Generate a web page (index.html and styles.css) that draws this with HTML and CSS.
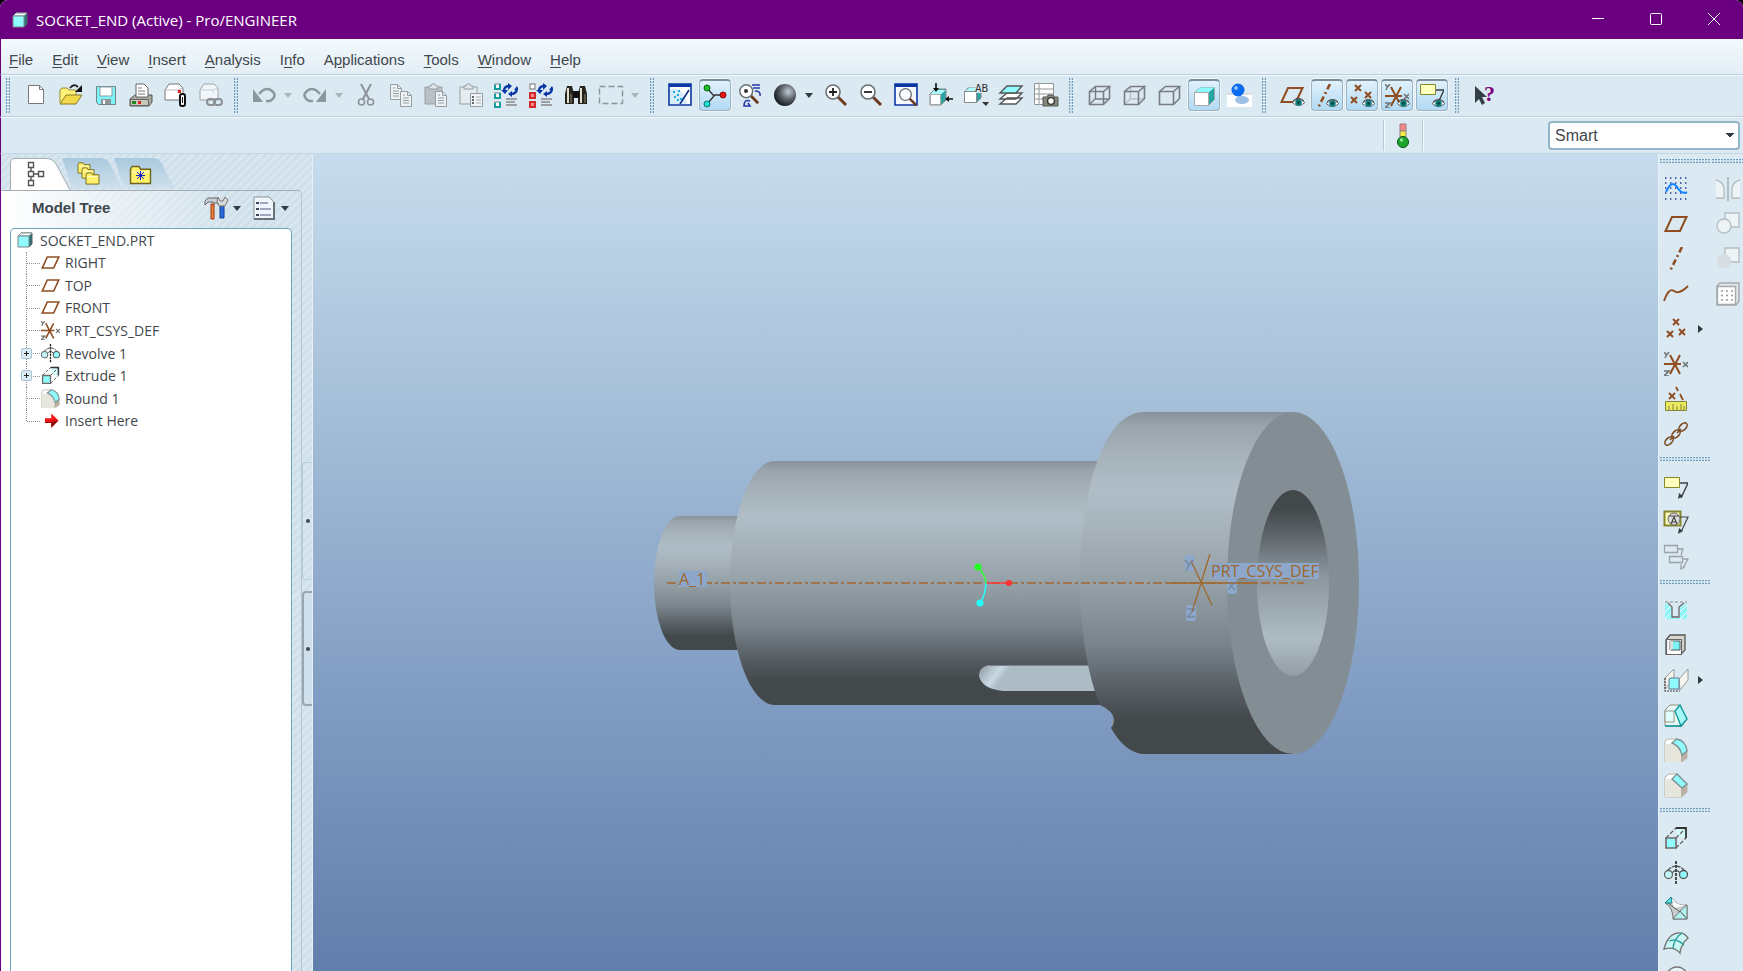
FILE: index.html
```html
<!DOCTYPE html>
<html lang="en">

<head>
    <meta charset="UTF-8">
    <meta name="viewport" content="width=device-width, initial-scale=1.0">
    <title>SOCKET_END (Active) - Pro/ENGINEER</title>
    <link rel="stylesheet" href="styles.css">
</head>

<body>
    <!-- shared icons -->
    <svg class="sprite" aria-hidden="true">
        <symbol id="cube" viewBox="0 0 16 16">
            <path d="M1 4l3-3h11v11l-3 3z" fill="#26767a" stroke="#5a6264" />
            <path d="M1 4l3-3h11l-3 3z" fill="#f4ffff" stroke="#8a9496" />
            <path d="M1 4h11v11H1z" fill="#8ffbff" stroke="#7a8688" />
        </symbol>
        <symbol id="plane" viewBox="0 0 24 24">
            <path d="M8 5H22.500L16 19H1.500z" fill="none" stroke="#8f4d20" stroke-width="2" />
        </symbol>
        <symbol id="axis" viewBox="0 0 24 24">
            <path d="M18 0L6 24" fill="none" stroke="#8f4d20" stroke-width="2.600" stroke-dasharray="6 3 2 3" />
        </symbol>
        <symbol id="points" viewBox="0 0 24 24">
            <path d="M9 1l6 6m0-6l-6 6M15 11l6 6m0-6l-6 6M3 13l6 6m0-6l-6 6" fill="none" stroke="#8f4d20" stroke-width="2" />
        </symbol>
        <symbol id="csys" viewBox="0 0 24 24">
            <path d="M0 12h17M6 22L16 3M6 3l10 19" fill="none" stroke="#8f4d20" stroke-width="2" />
            <path d="M0 0l2.500 3L5 0M2.500 3L1 6M0 19h5l-5 5h5M19 10l5 5m0-5l-5 5" fill="none" stroke="#707678" stroke-width="1.600" />
        </symbol>
        <symbol id="eye" viewBox="0 0 14 10">
            <path d="M0 5Q7-2 14 5Q7 12 0 5z" fill="#fff" stroke="#555" />
            <circle cx="7" cy="5" r="3.600" fill="#0a7f7c" />
            <circle cx="7" cy="5" r="1.500" fill="#063c3c" />
            <path d="M1 3Q7-2 13 3" fill="none" stroke="#333" />
        </symbol>
        <symbol id="note" viewBox="0 0 24 24">
            <path d="M.500 2.500h15v10H.500z" fill="#ffffbe" stroke="#85852c" />
            <path d="M16 8h8l-7 15" fill="none" stroke="#3c4144" stroke-width="1.400" />
            <path d="M14 24l1-6 4 3z" fill="#3c4144" />
        </symbol>
        <symbol id="extrude" viewBox="0 0 24 24">
            <path d="M12 2h10v10l-8-2z" fill="#d6fbfb" />
            <path d="M2 12L12 2M12 12L22 2M12 22l10-10" fill="none" stroke="#555" stroke-width="1.200" stroke-dasharray="4 2" />
            <path d="M12 2h10v10" fill="none" stroke="#333" stroke-width="1.800" />
            <path d="M2 12h10v10H2z" fill="#8ffbff" stroke="#6f6a66" stroke-width="1.600" />
        </symbol>
        <symbol id="revolve" viewBox="0 0 24 24">
            <path d="M12 0v24" stroke="#222" stroke-width="1.600" stroke-dasharray="3 1" />
            <path d="M4 9Q12 1 20 9M8 12Q12 7 16 12" fill="none" stroke="#444" stroke-width="1.200" stroke-dasharray="4 1" />
            <circle cx="4.500" cy="13.500" r="4" fill="#c3fbfc" stroke="#666" stroke-width="1.300" />
            <circle cx="19.500" cy="13.500" r="4" fill="#8ffbff" stroke="#555" stroke-width="1.300" />
        </symbol>
        <symbol id="round" viewBox="0 0 24 24">
            <path d="M1 3L4 1h9q9 2 10 12v7l-5 4H1z" fill="#fff" stroke="#b9b4a8" />
            <path d="M1 6h7q8 2 9 11v7H1z" fill="#e7e6dc" />
            <path d="M17 17v7l6-4v-7z" fill="#b9b2a4" />
            <path d="M8 5l5-4q9 2 10 12l-5 4Q16 8 8 5z" fill="#8ffbff" stroke="#7c9090" stroke-width="1.400" />
        </symbol>
        <symbol id="wire" viewBox="0 0 24 24">
            <path d="M2.500 8.500h14v13h-14zM2.500 8.500l6-5h14l-6 5M22.500 3.500v12l-6 6" fill="none" stroke="#777d80" stroke-width="1.600" />
        </symbol>
        <symbol id="lens" viewBox="0 0 24 24">
            <path d="M14 14l8 8" stroke="#6d3a20" stroke-width="3" />
            <circle cx="9" cy="9" r="7" fill="#fff" stroke="#6a6f72" stroke-width="1.600" />
        </symbol>
        <symbol id="envelope" viewBox="0 0 24 24">
            <path d="M1 7l4-6h10l4 4v12H1z" fill="#fff" stroke="#777" />
            <path d="M1 7h13l5-2M14 7v3" fill="none" stroke="#bbb" />
        </symbol>
        <symbol id="sync" viewBox="0 0 24 24">
            <path d="M10 8q0-5 5-5M23 5q0 6-6 6" fill="none" stroke="#0b37a4" stroke-width="2.400" />
            <path d="M14 0l4 3-4 4zM7 7h7l-3 4zM18 8v6l-4-3zM20 7l3-4 2 4z" fill="#0b37a4" />
            <path d="M12 16h11M12 19h9M12 22h11" stroke="#888" stroke-width="1.400" />
        </symbol>
        <symbol id="sheet" viewBox="0 0 12 16">
            <path d="M.500.500h7l4 4v11H.500z" fill="#edf2f5" stroke="#969ea3" />
            <path d="M7.500.500v4h4M3 4h2M3 7h6M3 9.500h6M3 12h6" fill="none" stroke="#969ea3" />
        </symbol>
        <symbol id="clipboard" viewBox="0 0 20 22">
            <path d="M1 4h17v17H1z" stroke="#969ea3" />
            <path d="M5 6V3h2l1-2h3l1 2h2v3z" fill="#dfe6ea" stroke="#969ea3" />
        </symbol>
        <symbol id="folder" viewBox="0 0 16 14">
            <path d="M1 3l1-2h5l1 2h7v10H1z" fill="#fff16a" stroke="#6d6420" />
            <path d="M2 5h12" stroke="#fffbd0" />
        </symbol>
    </svg>

    <div class="window">
        <header class="titlebar">
            <svg class="app-icon"><use href="#cube" /></svg>
            <h1>SOCKET_END (Active) - Pro/ENGINEER</h1>
            <button aria-label="Minimize"><svg viewBox="0 0 12 12"><path d="M0 5.500h12" /></svg></button>
            <button aria-label="Maximize"><svg viewBox="0 0 12 12"><rect x=".5" y=".5" width="11" height="11" rx="1" /></svg></button>
            <button aria-label="Close"><svg viewBox="0 0 12 12"><path d="M0 0l12 12M12 0L0 12" /></svg></button>
        </header>

        <nav class="menubar">
            <button><u>F</u>ile</button>
            <button><u>E</u>dit</button>
            <button><u>V</u>iew</button>
            <button><u>I</u>nsert</button>
            <button><u>A</u>nalysis</button>
            <button>I<u>n</u>fo</button>
            <button>A<u>p</u>plications</button>
            <button><u>T</u>ools</button>
            <button><u>W</u>indow</button>
            <button><u>H</u>elp</button>
        </nav>

        <div class="toolbar">
            <!-- file -->
            <div class="group">
                <button class="tool" aria-label="New"><svg viewBox="0 0 24 24"><path d="M4.500 2.500h11l4 4v14h-15z" fill="#fff" stroke="#777" /><path d="M15.500 2.500v4h4" fill="none" stroke="#777" /></svg></button>
                <button class="tool" aria-label="Open"><svg viewBox="0 0 24 24"><path d="M1 20V7l2-2h5l2 2h7v5" fill="#fff07a" stroke="#9b8c32" /><path d="M1 21l6-9h16l-6 9z" fill="#f0d848" stroke="#8a7a26" /><path d="M11 5q4-5 8-1" fill="none" stroke="#222" stroke-width="1.800" /><path d="M23 2v7h-7z" fill="#111" /></svg></button>
                <button class="tool" aria-label="Save"><svg viewBox="0 0 24 24"><path d="M2.500 3.500h19v18h-17l-2-2z" fill="#7ff3fa" stroke="#6f8488" /><path d="M6 4h12v9H6z" fill="#fff" stroke="#88a4a8" /><path d="M7 16h10v5H7z" fill="#8f9496" /><path d="M9 17h2v4H9z" fill="#fff" /></svg></button>
                <button class="tool" aria-label="Print"><svg viewBox="0 0 24 24"><path d="M1 16l5-4h17v7l-3 4H1z" fill="#a9a89f" stroke="#555" /><path d="M1.500 16.500h18v6h-18z" fill="#c9c7bb" stroke="#666" /><path d="M7 14V1h8l4 4v9z" fill="#fff" stroke="#666" /><path d="M9 5h4M9 8h7M9 11h7" stroke="#777" /><path d="M3 18h4v3H3z" fill="#1c8a20" /><path d="M9 18h3v3H9z" fill="#d22" /></svg></button>
                <button class="tool" aria-label="Send mail"><svg viewBox="0 0 24 24"><use href="#envelope" width="24" height="24" /><path d="M14 7h3v3h-3z" fill="#e02020" /><rect x="16" y="11" width="5" height="12" rx="2" fill="#fff" stroke="#111" stroke-width="2" /><path d="M18.500 14v6" stroke="#111" /></svg></button>
                <button class="tool off" aria-label="Send link"><svg viewBox="0 0 24 24"><use href="#envelope" width="24" height="24" /><rect x="8" y="16" width="8" height="6" rx="3" fill="none" stroke="#555" stroke-width="2" /><rect x="15" y="16" width="8" height="6" rx="3" fill="none" stroke="#555" stroke-width="2" /></svg></button>
            </div>

            <!-- edit -->
            <div class="group">
                <button class="tool" aria-label="Undo"><svg viewBox="0 0 24 24"><path d="M7 11Q14 3 20 8t-2 10h-4" fill="none" stroke="#8b979e" stroke-width="2.400" /><path d="M1 6v13h10z" fill="#8b979e" /></svg></button>
                <button class="drop pale" aria-label="Undo list"></button>
                <button class="tool" aria-label="Redo"><svg viewBox="0 0 24 24"><path d="M17 11Q10 3 4 8t2 10h4" fill="none" stroke="#8b979e" stroke-width="2.400" /><path d="M23 6v13H13z" fill="#8b979e" /></svg></button>
                <button class="drop pale" aria-label="Redo list"></button>
                <button class="tool" aria-label="Cut"><svg viewBox="0 0 24 24"><path d="M7 1l8 15M17 1L9 16" stroke="#8b9398" stroke-width="2" /><circle cx="7.500" cy="19" r="3" fill="none" stroke="#8b9398" stroke-width="1.600" /><circle cx="16.500" cy="19" r="3" fill="none" stroke="#8b9398" stroke-width="1.600" /></svg></button>
                <button class="tool" aria-label="Copy"><svg viewBox="0 0 24 24"><use href="#sheet" x="1" y="1" width="12" height="16" /><use href="#sheet" x="11" y="8" width="12" height="16" /></svg></button>
                <button class="tool" aria-label="Paste"><svg viewBox="0 0 24 24"><use href="#clipboard" width="20" height="22" fill="#b9c1c6" /><use href="#sheet" x="11" y="8" width="12" height="16" /></svg></button>
                <button class="tool" aria-label="Paste special"><svg viewBox="0 0 24 24"><use href="#clipboard" width="20" height="22" fill="#e6edf1" /><path d="M11.500 10.500h12v13h-12z" fill="#f0f4f6" stroke="#969ea3" /><path d="M13 14h2M13 17h2M13 20h2" stroke="#666" stroke-width="2" /><path d="M17 14h5M17 17h5M17 20h5" stroke="#aaa" /></svg></button>
                <button class="tool" aria-label="Regenerate"><svg viewBox="0 0 24 24"><path d="M1 1h5v5H1zM1 10h5v5H1zM1 19h5v5H1z" fill="#fff" stroke="#7a8688" stroke-width="1.200" /><path d="M1 2v4h5V1M1 11v4h5v-5M1 20v4h5v-5" fill="none" stroke="#169c9c" stroke-width="2" /><use href="#sync" width="24" height="24" /></svg></button>
                <button class="tool" aria-label="Regenerate manager"><svg viewBox="0 0 24 24"><path d="M1 1h5v5H1z" fill="#fff" stroke="#999" stroke-width="1.400" /><path d="M1 10h5v5H1zM1 19h5v5H1z" fill="#ff8a8a" stroke="#d02a2a" stroke-width="2" /><use href="#sync" width="24" height="24" /></svg></button>
                <button class="tool" aria-label="Find"><svg viewBox="0 0 24 24"><path d="M3 3h5l2 8v10H1V11zM16 3h5l2 8v10h-9V11z" fill="#26241f" /><path d="M9 8h6v7H9z" fill="#111" /><path d="M4 5v15M17 5v15" stroke="#e3dfcb" stroke-width="2" /><path d="M7 11v9M21 11v9" stroke="#8d8873" /></svg></button>
                <button class="tool" aria-label="Select"><svg viewBox="0 0 24 24"><path d="M.500 3.500h23v17H.500z" fill="none" stroke="#8b9398" stroke-width="1.400" stroke-dasharray="6 3" /></svg></button>
                <button class="drop pale" aria-label="Select options"></button>
            </div>

            <!-- view -->
            <div class="group">
                <button class="tool" aria-label="Repaint"><svg viewBox="0 0 24 24"><path d="M1 1h22v21H1z" fill="#fff" stroke="#0b37a4" stroke-width="1.600" /><path d="M1 1h22v3H1z" fill="#0b37a4" /><path d="M2 6q14-2 17 15H2z" fill="#d6ecfa" /><path d="M21 7L12 21" stroke="#0b2f8a" stroke-width="1.600" /><path d="M5 9h2M9 12h2M6 14h2M10 8h2M12 16h2M9 17h2" stroke="#1eaae8" stroke-width="2" /></svg></button>
                <button class="tool on" aria-label="Spin center"><svg viewBox="0 0 24 24"><path d="M4 4l7 8-7 8M11 11h10" fill="none" stroke="#333" stroke-width="1.400" /><circle cx="4" cy="4" r="3" fill="#19c321" stroke="#0a5f10" /><circle cx="20" cy="11" r="3" fill="#ee1515" stroke="#7d0808" /><circle cx="4" cy="20" r="3" fill="#1fe0d8" stroke="#0c6f6c" /></svg></button>
                <button class="tool" aria-label="Orient mode"><svg viewBox="0 0 24 24"><use href="#lens" width="22" height="22" /><circle cx="8" cy="8" r="2" fill="#333" /><path d="M14 2h8M15 5h7M17 8q6 0 5 5M12 18q-6-2-6 5h6l-2-3" fill="none" stroke="#2438a8" stroke-width="1.600" /></svg></button>
                <button class="tool" aria-label="Appearance"><svg viewBox="0 0 24 24"><defs><radialGradient id="ball" cx="65%" cy="35%" r="70%"><stop offset="0" stop-color="#c3cbd2" /><stop offset=".5" stop-color="#5d666e" /><stop offset="1" stop-color="#14171a" /></radialGradient></defs><circle cx="12" cy="12" r="11" fill="url(#ball)" /></svg></button>
                <button class="drop" aria-label="Appearance list"></button>
                <button class="tool" aria-label="Zoom in"><svg viewBox="0 0 24 24"><use href="#lens" width="24" height="24" /><path d="M5 9h8M9 5v8" stroke="#222" stroke-width="1.800" /></svg></button>
                <button class="tool" aria-label="Zoom out"><svg viewBox="0 0 24 24"><use href="#lens" width="24" height="24" /><path d="M5 9h8" stroke="#222" stroke-width="1.800" /></svg></button>
                <button class="tool" aria-label="Refit"><svg viewBox="0 0 24 24"><path d="M1 1h22v21H1z" fill="#f3f8fc" stroke="#0b37a4" stroke-width="1.600" /><path d="M1 1h22v3H1z" fill="#0b37a4" /><use href="#lens" x="4" y="4" width="20" height="20" /></svg></button>
                <button class="tool" aria-label="Reorient"><svg viewBox="0 0 24 24"><path d="M1 11l5-5h11v11l-5 5H1z" fill="#2ba4a4" stroke="#888" /><path d="M1.500 11.500h10v10h-10z" fill="#fff" stroke="#aaa" /><path d="M1.500 11l4-4h11l-4 4z" fill="#aafcff" /><path d="M7 0v6M24 16h-6" stroke="#111" stroke-width="1.600" /><path d="M4 5h6l-3 4zM20 13v6l-4-3z" fill="#111" /></svg></button>
                <button class="tool" aria-label="Saved views"><svg viewBox="0 0 24 24"><path d="M0 9l4-4h13v10l-4 4z" fill="#2ba4a4" stroke="#888" /><path d="M.500 8.500h12v11H.500z" fill="#fff" stroke="#888" /><path d="M1 8l4-3h11l-3 3z" fill="#aafcff" /><path d="M11-1h14v11H12z" fill="#dce9f2" /><text x="11" y="9" class="mini">AB</text><path d="M18 19h7l-3 4z" fill="#333" /></svg></button>
                <button class="tool" aria-label="Layers"><svg viewBox="0 0 24 24"><path d="M1 21l7-6h15l-6 6zM1 16l7-6h15l-6 6z" fill="#fff" stroke="#555" stroke-width="1.400" /><path d="M1 10l7-7h15l-6 7z" fill="#8ffbff" stroke="#555" stroke-width="1.400" /></svg></button>
                <button class="tool" aria-label="View manager"><svg viewBox="0 0 24 24"><path d="M.500.500h19v21H.500zM5 1v20M1 6h18M1 11h18M1 16h18" fill="#fff" stroke="#909598" /><path d="M9 14h4l1-2h5l1 2h4v9H9z" fill="#85867c" stroke="#55564e" /><circle cx="17" cy="18" r="3.400" fill="#fff" stroke="#333" stroke-width="1.400" /></svg></button>
            </div>

            <!-- display style -->
            <div class="group">
                <button class="tool" aria-label="Wireframe"><svg viewBox="0 0 24 24"><use href="#wire" width="24" height="24" /><path d="M8.500 4v12h14M8.500 15.500l-6 6" fill="none" stroke="#777d80" stroke-width="1.400" /></svg></button>
                <button class="tool" aria-label="Hidden line"><svg viewBox="0 0 24 24"><path d="M8.500 4v12h14M8.500 15.500l-6 6" fill="none" stroke="#b9c0c4" stroke-width="1.400" /><use href="#wire" width="24" height="24" /></svg></button>
                <button class="tool" aria-label="No hidden"><svg viewBox="0 0 24 24"><use href="#wire" width="24" height="24" /></svg></button>
                <button class="tool on" aria-label="Shading"><svg viewBox="0 0 24 24"><path d="M2.500 8.500l6-5h14v12l-6 6z" fill="#27a5a3" stroke="#9aa" /><path d="M2.500 8.500l6-5h14l-6 5z" fill="#8ffbff" /><path d="M2.500 8.500h14v13h-14z" fill="#fff" stroke="#aaa" /></svg></button>
                <button class="tool" aria-label="Enhanced realism"><svg viewBox="0 0 24 24"><path d="M0 11h25v13H0z" fill="#fff" /><path d="M0 11h25" stroke="#ccc" /><ellipse cx="15" cy="17" rx="7" ry="4" fill="#9cc0e6" /><circle cx="11" cy="7" r="6.500" fill="#0b6cf0" /><circle cx="9" cy="5" r="2" fill="#8cc2ff" /></svg></button>
            </div>

            <!-- datum display -->
            <div class="group">
                <button class="tool" aria-label="Show planes"><svg viewBox="0 0 24 24"><use href="#plane" width="24" height="24" /><use href="#eye" x="12" y="15" width="13" height="9" /></svg></button>
                <button class="tool on" aria-label="Show axes"><svg viewBox="0 0 24 24"><use href="#axis" x="-3" width="24" height="24" /><use href="#eye" x="11" y="15" width="13" height="9" /></svg></button>
                <button class="tool on" aria-label="Show points"><svg viewBox="0 0 24 24"><path d="M5 1l6 6m0-6l-6 6M15 8l6 6m0-6l-6 6M1 13l6 6m0-6l-6 6" fill="none" stroke="#8f4d20" stroke-width="2" /><use href="#eye" x="12" y="15" width="13" height="9" /></svg></button>
                <button class="tool on" aria-label="Show csys"><svg viewBox="0 0 24 24"><use href="#csys" width="24" height="24" /><use href="#eye" x="12" y="15" width="13" height="9" /></svg></button>
                <button class="tool on" aria-label="Show annotations"><svg viewBox="0 0 24 24"><use href="#note" y="-2" width="24" height="24" /><use href="#eye" x="12" y="15" width="13" height="9" /></svg></button>
            </div>

            <div class="group">
                <button class="tool" aria-label="Context help"><svg viewBox="0 0 24 24"><path d="M2 3v17l4-4 3 6 3-2-3-6h5z" fill="#333e46" /><text x="11" y="18" class="ask">?</text></svg></button>
            </div>
        </div>

        <div class="statusbar">
            <div class="status-light">
                <svg viewBox="0 0 14 26"><path d="M4 1h6v7H4z" fill="#f08a8a" stroke="#a77" /><path d="M4 8h6v6H4z" fill="#f5ee3c" stroke="#888" /><circle cx="7" cy="19" r="5.500" fill="#1ea52c" stroke="#0b5514" /><circle cx="5.500" cy="17" r="1.700" fill="#8be693" /></svg>
            </div>
            <select class="filter" aria-label="Selection filter">
                <option>Smart</option>
            </select>
        </div>

        <main class="workspace">
            <aside class="navigator">
                <div class="tabs">
                    <button class="tab active" aria-label="Model Tree">
                        <svg viewBox="0 0 60 32"><path d="M.500 32V5Q.500.500 5 .500H36Q43 .500 46 6L60 32" fill="#fff" stroke="#a3adb3" /><path d="M18.500 4.500h5v5h-5zM18.500 13.500h5v5h-5zM18.500 22.500h5v5h-5zM28.500 13.500h5v5h-5zM21 10v3M21 19v3M24 16h4" fill="none" stroke="#555" stroke-width="1.400" /></svg>
                    </button>
                    <button class="tab" aria-label="Folders">
                        <svg viewBox="0 0 60 32"><path d="M0 0H38Q45 0 48 6L60 30H10z" fill="url(#tabfade)" /><use href="#folder" x="15" y="4" width="14" height="12" /><use href="#folder" x="19" y="9" width="14" height="12" /><use href="#folder" x="23" y="14" width="15" height="13" /></svg>
                    </button>
                    <button class="tab" aria-label="Favorites">
                        <svg viewBox="0 0 60 32"><defs><linearGradient id="tabfade" x2="0" y2="1"><stop offset="0" stop-color="#a9c9df" /><stop offset="1" stop-color="#cfe0eb" /></linearGradient></defs><path d="M0 0H38Q45 0 48 6L60 30H10z" fill="url(#tabfade)" /><use href="#folder" x="15" y="7" width="23" height="20" /><path d="M26.500 13v9M22 17.500h9M23 14l7 7M30 14l-7 7" stroke="#1226c8" /></svg>
                    </button>
                </div>

                <section class="panel">
                    <div class="panel-head">
                        <h2>Model Tree</h2>
                        <button class="tool" aria-label="Settings"><svg viewBox="0 0 24 24"><path d="M1 5l3-3h9l2 2v3H9v-1H4L1 9z" fill="#c9cfd2" stroke="#666" /><path d="M7 8h3v15H7z" fill="#e88630" stroke="#a03018" /><path d="M16 10h4v12h-4z" fill="#2a6be0" stroke="#123c96" /><path d="M14 1l2 4h3l2-4 3 3-3 6h-6l-2-5z" fill="#d5dadd" stroke="#777" /></svg></button>
                        <button class="drop" aria-label="Settings menu"></button>
                        <button class="tool" aria-label="Show"><svg viewBox="0 0 24 24"><path d="M2 1h15l5 5v17H2z" fill="#eef6fc" stroke="#8b959b" /><path d="M22 6v17H2" fill="none" stroke="#667077" stroke-width="2" /><path d="M8 7h8M8 13h11M8 19h11" stroke="#88a" stroke-width="1.400" /><path d="M4 7h3M4 13h3M4 19h3" stroke="#445" stroke-width="2" /></svg></button>
                        <button class="drop" aria-label="Show menu"></button>
                    </div>

                    <div class="tree-box">
                        <ul class="tree">
                            <li class="root"><svg><use href="#cube" /></svg>SOCKET_END.PRT</li>
                            <li><svg><use href="#plane" /></svg>RIGHT</li>
                            <li><svg><use href="#plane" /></svg>TOP</li>
                            <li><svg><use href="#plane" /></svg>FRONT</li>
                            <li><svg><use href="#csys" /></svg>PRT_CSYS_DEF</li>
                            <li><button class="expand" aria-label="Expand Revolve 1"></button><svg><use href="#revolve" /></svg>Revolve 1</li>
                            <li><button class="expand" aria-label="Expand Extrude 1"></button><svg><use href="#extrude" /></svg>Extrude 1</li>
                            <li><svg><use href="#round" /></svg>Round 1</li>
                            <li class="last"><svg viewBox="0 0 24 24"><path d="M5 9h8V3l9 9-9 9v-6H5z" fill="#f01414" /><path d="M5 14h8l9-2-9 9v-6H5z" fill="#8d0c0c" /></svg>Insert Here</li>
                        </ul>
                    </div>
                </section>

                <div class="sashes">
                    <button class="sash" aria-label="Resize navigator"></button>
                    <button class="sash raised" aria-label="Collapse navigator"></button>
                </div>
            </aside>

            <section class="viewport">
                <svg viewBox="313 153 1345 817" preserveAspectRatio="xMidYMin slice">
                    <defs>
                        <linearGradient id="metal" x2="0" y2="1">
                            <stop offset="0" stop-color="#88929a" />
                            <stop offset=".04" stop-color="#99a4ab" />
                            <stop offset=".13" stop-color="#a7b3bb" />
                            <stop offset=".23" stop-color="#b0bdc7" />
                            <stop offset=".35" stop-color="#a6b2ba" />
                            <stop offset=".52" stop-color="#929da4" />
                            <stop offset=".68" stop-color="#78848a" />
                            <stop offset=".8" stop-color="#596067" />
                            <stop offset=".9" stop-color="#43484b" />
                            <stop offset="1" stop-color="#43484b" />
                        </linearGradient>
                        <linearGradient id="bore" x2="0" y2="1">
                            <stop offset="0" stop-color="#43484b" />
                            <stop offset=".1" stop-color="#43484b" />
                            <stop offset=".22" stop-color="#596065" />
                            <stop offset=".45" stop-color="#89949b" />
                            <stop offset=".8" stop-color="#afbcc5" />
                            <stop offset="1" stop-color="#929da4" />
                        </linearGradient>
                        <linearGradient id="slot" y2=".15">
                            <stop offset="0" stop-color="#8b979f" />
                            <stop offset=".18" stop-color="#c9d9e3" />
                            <stop offset=".25" stop-color="#adbbc5" />
                            <stop offset="1" stop-color="#adbbc5" />
                        </linearGradient>
                    </defs>

                    <!-- part body -->
                    <path d="M760 515H680A26 67 0 0 0 680 649H760z" fill="url(#metal)" />
                    <path d="M1160 460H775A45 122 0 0 0 775 704H1160z" fill="url(#metal)" />
                    <path d="M1110 664H989Q979 666 979 675Q982 688 1003 690H1110z" fill="url(#slot)" />
                    <path d="M989 664.500H1110" stroke="#77828a" />
                    <path d="M1293 411H1144C1100 411 1080 500 1080 582C1080 630 1088 675 1100 704Q1120 713 1111 727Q1125 752 1144 753H1293z" fill="url(#metal)" />
                    <path d="M1112 726q-1-4 1-9q2 4-1 9z" fill="#8a959c" />
                    <ellipse cx="1293" cy="582" rx="66" ry="171" fill="#838d94" />
                    <ellipse cx="1293" cy="582" rx="36" ry="93" fill="url(#bore)" />

                    <!-- datum axis -->
                    <path d="M667 582H1304" stroke="#a0754d" stroke-width="2" stroke-dasharray="9 3 3 3" />
                    <rect x="679" y="570" width="28" height="16" fill="#8ca7ca" />
                    <text x="679" y="584" class="datum">A_1</text>

                    <!-- spin center -->
                    <path d="M986 582h22" stroke="#ff3a3a" stroke-width="1.500" />
                    <path d="M986 582q-1-8-7-15" fill="none" stroke="#3aff3a" stroke-width="1.500" />
                    <path d="M986 582q0 8-5 20" fill="none" stroke="#2ff" stroke-width="1.500" />
                    <circle cx="1009" cy="582" r="3" fill="#ff3030" />
                    <circle cx="978" cy="566" r="3.500" fill="#2f2" />
                    <circle cx="980" cy="602" r="3.500" fill="#2ff" />

                    <!-- coordinate system -->
                    <g fill="#8ca7ca">
                        <rect x="1185" y="554" width="9" height="16" />
                        <rect x="1186" y="604" width="10" height="16" rx="2" />
                        <rect x="1227" y="578" width="10" height="15" rx="2" />
                        <rect x="1210" y="562" width="109" height="16" />
                    </g>
                    <path d="M1168 582h89M1210 553l-18 58M1191 560l21 44" stroke="#a0682c" stroke-width="1.300" />
                    <path d="M1185 559l4 5 4-5M1189 564l-3 6M1187 608h8l-8 8h8M1228 581l7 8m0-8l-7 8" fill="none" stroke="#6e7686" />
                    <text x="1211" y="576" class="datum">PRT_CSYS_DEF</text>
                </svg>
            </section>

            <div class="features">
                <div class="column">
                    <div class="group">
                        <button class="tool" aria-label="Sketch"><svg viewBox="0 0 24 24"><path d="M1 1h22M1 6h22M1 11h22M1 16h22M1 22h22" stroke="#24348e" stroke-width="1.400" stroke-dasharray="1.400 3.600" /><path d="M2 15Q8 2 13 10T23 15" fill="none" stroke="#1187ff" stroke-width="2" /></svg></button>
                        <button class="tool" aria-label="Datum plane"><svg><use href="#plane" /></svg></button>
                        <button class="tool" aria-label="Datum axis"><svg><use href="#axis" /></svg></button>
                        <button class="tool" aria-label="Datum curve"><svg viewBox="0 0 24 24"><path d="M0 19Q5 5 10 9T24 4" fill="none" stroke="#8f4d20" stroke-width="1.800" /></svg></button>
                        <div class="with-flyout">
                            <button class="tool" aria-label="Datum point"><svg viewBox="0 0 24 24"><path d="M9 2l6 6m0-6l-6 6M15 12l6 6m0-6l-6 6M3 14l6 6m0-6l-6 6" fill="none" stroke="#8f4d20" stroke-width="2" /></svg></button>
                            <button class="flyout" aria-label="More points"></button>
                        </div>
                        <button class="tool" aria-label="Coordinate system"><svg><use href="#csys" /></svg></button>
                        <button class="tool" aria-label="Analysis feature"><svg viewBox="0 0 24 24"><path d="M5 6l6 6m0-6l-6 6M12 0l2 4M16 7l3 6" stroke="#8f4d20" stroke-width="1.800" /><path d="M1.500 14.500h21v9h-21z" fill="#e9ea62" stroke="#83833a" /><path d="M5 23v-4M9 23v-6M13 23v-4M17 23v-6M20 23v-4" stroke="#83833a" /></svg></button>
                        <button class="tool" aria-label="Reference feature"><svg viewBox="0 0 24 24"><g fill="none" stroke="#7a4a20" stroke-width="1.600"><ellipse cx="5" cy="19" rx="5" ry="3" transform="rotate(-45 5 19)" /><ellipse cx="12" cy="12" rx="5" ry="3" transform="rotate(-45 12 12)" /><ellipse cx="19" cy="5" rx="5" ry="3" transform="rotate(-45 19 5)" /><path d="M6 18l4-4M13 11l4-4" /></g></svg></button>
                    </div>
                    <div class="group">
                        <button class="tool" aria-label="Annotation"><svg><use href="#note" /></svg></button>
                        <button class="tool" aria-label="Annotation feature"><svg viewBox="0 0 24 24"><path d="M.500 1.500h16v14H.500z" fill="#ffffbe" stroke="#85852c" stroke-width="2" /><circle cx="10" cy="9" r="6" fill="#ddd" stroke="#666" /><path d="M7 14l3-7 3 7M8 12h4M5 6h10M16 7h8l-7 15" fill="none" stroke="#444" stroke-width="1.200" /><path d="M14 24l1-6 4 3z" fill="#3c4144" /></svg></button>
                        <button class="tool" aria-label="Propagation"><svg viewBox="0 0 24 24"><path d="M.500.500h13v7H.500zM5.500 11.500h13v6h-13zM14 4h5l-2 6M19 14h5l-5 9m-2-4v5l4-2" fill="none" stroke="#9aa3a8" stroke-width="1.300" /></svg></button>
                    </div>
                    <div class="group">
                        <button class="tool" aria-label="Hole"><svg viewBox="0 0 24 24"><path d="M1 5l7 5v10h8V10l7-5v16H1z" fill="#8ff6f8" /><path d="M1 14l7-7M1 21l7-7M16 14l7-7M16 21l7-7" stroke="#fff" /><path d="M1 4h22" stroke="#888" stroke-dasharray="3 2" /><path d="M4 5l4 4v10h7V9l5-4" fill="none" stroke="#666" stroke-width="1.300" /></svg></button>
                        <button class="tool" aria-label="Shell"><svg viewBox="0 0 24 24"><path d="M2 7l4-5h15v15l-4 4H2z" fill="#d9d6cb" stroke="#555" stroke-width="1.300" /><path d="M2.500 6.500h15v15h-15z" fill="#fff" stroke="#666" stroke-width="1.200" /><path d="M6 8h10v9H6z" fill="#7df3f7" stroke="#555" /><path d="M6 8h3v7l-3 3z" fill="#ddd" /></svg></button>
                        <div class="with-flyout">
                            <button class="tool" aria-label="Rib"><svg viewBox="0 0 24 24"><path d="M1 10L10 1v10l-9 10zM15 11l9-10v11l-8 10z" fill="#f4f4ee" stroke="#999" /><path d="M5 12q0-2 2-2h8v11H5z" fill="#8ffbff" stroke="#678" /><path d="M1 10v13h15" fill="none" stroke="#444" stroke-width="1.200" stroke-dasharray="2 1" /></svg></button>
                            <button class="flyout" aria-label="More ribs"></button>
                        </div>
                        <button class="tool" aria-label="Draft"><svg viewBox="0 0 24 24"><path d="M1 7l5-5h9l8 14-5 7H1z" fill="#e6f7f6" stroke="#938e80" /><path d="M1 8h9v11H1z" fill="#e2fffc" stroke="#9a9586" /><path d="M11 8l5-6 7 14-6 7z" fill="#a6f7f7" stroke="#129a9a" stroke-width="1.400" /><path d="M1 23h17" stroke="#129a9a" stroke-width="1.600" /></svg></button>
                        <button class="tool" aria-label="Round"><svg><use href="#round" /></svg></button>
                        <button class="tool" aria-label="Chamfer"><svg viewBox="0 0 24 24"><path d="M1 4l4-3h8l10 10v8l-5 5H1z" fill="#fff" stroke="#b9b4a8" /><path d="M1 6h8l8 9v9H1z" fill="#e7e6dc" /><path d="M17 15v9l6-5v-8z" fill="#b9b2a4" /><path d="M8 6l5-5 10 10-5 4z" fill="#8ffbff" stroke="#7c9090" stroke-width="1.400" /></svg></button>
                    </div>
                    <div class="group">
                        <button class="tool" aria-label="Extrude"><svg><use href="#extrude" /></svg></button>
                        <button class="tool" aria-label="Revolve"><svg><use href="#revolve" /></svg></button>
                        <button class="tool" aria-label="Sweep blend"><svg viewBox="0 0 24 24"><path d="M1 7q8 4 8 16h14V9Q13 11 7 1z" fill="#c9cccd" stroke="#777" /><path d="M7 1q6 10 16 8l-13 3z" fill="#fff" /><path d="M1 7l6-6 1 6z" fill="#5fe3e6" stroke="#188" /><path d="M9 23l7-8 7 8zM16 15l7-6v14z" fill="#b2f2ee" stroke="#777" /><path d="M4 7l12 9" stroke="#555" /></svg></button>
                        <button class="tool" aria-label="Boundary blend"><svg viewBox="0 0 24 24"><path d="M0 18Q4 3 14 2q6-1 10 5-7 6-8 15-6-7-16-4z" fill="#c9f7f5" stroke="#777" stroke-width="1.400" /><path d="M5 10q8-3 15 4M9 17Q10 7 18 2" fill="none" stroke="#239a9a" stroke-width="1.300" /></svg></button>
                        <button class="tool" aria-label="Style"><svg viewBox="0 0 24 24"><path d="M3 7Q7 1 13 1t10 6v9H3z" fill="#dff6f5" stroke="#777" stroke-width="1.400" /></svg></button>
                    </div>
                </div>
                <div class="column">
                    <div class="group">
                        <button class="tool" aria-label="Mirror"><svg viewBox="0 0 24 24"><path d="M0 3q8 2 8 10v8H0M24 3q-8 2-8 10v8h8" fill="#eef3f6" stroke="#b6bfc4" stroke-width="1.400" /><path d="M12 0v24" stroke="#a3adb3" stroke-width="1.400" /></svg></button>
                        <button class="tool" aria-label="Merge"><svg viewBox="0 0 24 24"><path d="M9 1h14v14H9z" fill="#eef3f6" stroke="#b6bfc4" stroke-width="1.400" /><circle cx="8" cy="14" r="7" fill="#eef3f6" stroke="#b6bfc4" stroke-width="1.400" /></svg></button>
                        <button class="tool" aria-label="Trim"><svg viewBox="0 0 24 24"><path d="M9 1h14v14H9z" fill="#eef3f6" stroke="#b6bfc4" stroke-width="1.400" /><circle cx="8" cy="14" r="7" fill="#d7dde1" /></svg></button>
                        <button class="tool" aria-label="Pattern"><svg viewBox="0 0 24 24"><path d="M1 4l3-3h19v18l-3 4H1z" fill="#dfe5e8" stroke="#a3a9ad" stroke-width="1.400" /><path d="M1.500 4.500h18v18h-18z" fill="#fff" stroke="#a3a9ad" stroke-width="1.400" /><path d="M5 9h13M5 13.500h13M5 18h13" stroke="#999" stroke-width="1.600" stroke-dasharray="2 3" /></svg></button>
                    </div>
                </div>
            </div>
        </main>
    </div>
</body>

</html>
```

FILE: styles.css
```css
* {
    box-sizing: border-box;
}

body {
    margin: 0;
    background: #000;
    font-family: "Liberation Sans", Arial, sans-serif;
    font-size: 15px;
    color: #3f474d;
}

button {
    margin: 0;
    padding: 0;
    border: none;
    background: none;
    font: inherit;
    color: inherit;
}

.sprite {
    position: absolute;
    width: 0;
    height: 0;
}

.window {
    height: 100vh;
    display: flex;
    flex-direction: column;
    overflow: hidden;
    border-radius: 8px 8px 0 0;
    background: #dbe9f2;
}

/* title bar */
.titlebar {
    flex: none;
    height: 39px;
    display: flex;
    align-items: center;
    padding-left: 12px;
    background: #6a007f;
    color: #fff;
}

.app-icon {
    width: 16px;
    height: 16px;
}

.titlebar h1 {
    flex: 1;
    margin: 0 0 0 8px;
    font: 400 15px "Open Sans", "Noto Sans", sans-serif;
}

.titlebar button {
    width: 58px;
    height: 39px;
}

.titlebar button svg {
    width: 12px;
    height: 12px;
    fill: none;
    stroke: #fff;
}

/* menu bar */
.menubar {
    flex: none;
    height: 35px;
    display: flex;
    align-items: center;
    gap: 19px;
    padding: 6px 0 0 8px;
    border-left: 1px solid #6a007f;
    background: linear-gradient(#f2fafd, #e3edf4);
}

.menubar u {
    text-underline-offset: 2px;
}

/* toolbars */
.toolbar {
    flex: none;
    height: 43px;
    display: flex;
    align-items: center;
    padding-bottom: 1px;
    border-left: 1px solid #6a007f;
    border-top: 1px solid #b9d0e0;
    border-bottom: 1px solid #bccfdd;
    box-shadow: inset 0 1px #f0f6fa;
}

.group {
    display: flex;
    align-items: center;
    gap: 3px;
}

.group::before {
    content: '';
    width: 4px;
    height: 35px;
    margin: 0 7px;
    background:
        repeating-linear-gradient(to bottom, transparent 0 2px, #dbe9f2 2px 3px),
        repeating-linear-gradient(to right, #6f9cba 0 1px, #c4d9e6 1px 3px);
}

.toolbar .group:first-child::before {
    margin-left: 5px;
}

.tool {
    flex: none;
    width: 32px;
    height: 32px;
    display: flex;
    align-items: center;
    justify-content: center;
}

.tool svg {
    flex: none;
    width: 24px;
    height: 24px;
    overflow: visible;
}

.tool.on {
    border: 1px solid #9db4c3;
    border-top: 2px solid #7d8e99;
    border-radius: 4px;
    background: linear-gradient(#e0f1fb, #b2daf4);
    box-shadow: 0 0 0 1px #eef6fa;
}

.tool.off {
    opacity: 0.6;
}

.drop {
    flex: none;
    width: 16px;
    height: 32px;
    margin-left: -3px;
}

.drop::before {
    content: '';
    display: block;
    width: 0;
    margin: 0 auto;
    border: 4px solid transparent;
    border-top: 5px solid #2f3a42;
    border-bottom: none;
}

.drop.pale::before {
    border-top-color: #a9b5bc;
}

.mini {
    font: 11px "DejaVu Sans Mono", monospace;
    fill: #333;
}

.ask {
    font: bold 22px "Liberation Serif", serif;
    fill: #7b0080;
}

.statusbar {
    flex: none;
    height: 37px;
    display: flex;
    align-items: center;
    justify-content: flex-end;
    gap: 125px;
    padding-right: 3px;
    border-left: 1px solid #6a007f;
    border-top: 1px solid #f0f6fa;
    border-bottom: 1px solid #c3d6e3;
}

.status-light {
    width: 40px;
    height: 31px;
    display: flex;
    align-items: center;
    justify-content: center;
    border: solid #b9cad6;
    border-width: 0 1px;
    box-shadow: inset 1px 0 #f4f9fc, 1px 0 #f4f9fc;
}

.status-light svg {
    width: 14px;
    height: 26px;
}

.filter {
    width: 192px;
    height: 29px;
    padding: 0 5px;
    appearance: none;
    border: 2px solid #94b6cb;
    border-radius: 4px;
    background:
        linear-gradient(to bottom left, #2f3a42 50%, transparent 51%) right 8px center / 4px 5px no-repeat,
        linear-gradient(to bottom right, #2f3a42 50%, transparent 51%) right 4px center / 4px 5px no-repeat,
        #fff;
    font: 16px "Liberation Sans", Arial, sans-serif;
    color: #3f474d;
}

/* workspace */
.workspace {
    flex: 1;
    min-height: 0;
    display: flex;
}

.navigator {
    flex: none;
    width: 313px;
    display: grid;
    grid-template-columns: 301px 10px;
    grid-template-rows: 36px 1fr;
    border-left: 1px solid #6a007f;
    border-right: 1px solid #e6f0f6;
    background: repeating-linear-gradient(135deg, #d0e0eb 0 3px, #d8e6ef 3px 6px);
}

.tabs {
    grid-column: 1 / 3;
    display: flex;
    padding: 4px 0 0 9px;
}

.tab {
    width: 52px;
    height: 32px;
}

.tab svg {
    display: block;
    width: 60px;
    height: 32px;
    overflow: visible;
}

.tab.active {
    position: relative;
    z-index: 1;
}

.panel {
    display: flex;
    flex-direction: column;
    padding: 0 9px;
    border-top: 1px solid #a3adb3;
    border-right: 1px solid #b7c6d0;
    border-radius: 0 5px 0 0;
    background: linear-gradient(to right, #fff, rgba(255, 255, 255, 0) 75%);
}

.panel-head {
    flex: none;
    height: 37px;
    display: flex;
    align-items: center;
    padding-bottom: 3px;
}

.panel-head h2 {
    flex: 1;
    margin: 0 0 0 22px;
    font-size: 15px;
    line-height: 18px;
}

.panel-head .tool {
    width: 28px;
}

.panel-head .drop {
    width: 14px;
    margin: 0 6px 0 0;
}

.panel-head .drop:last-child {
    margin-right: 0;
}

.tree-box {
    flex: 1;
    padding: 0 6px;
    border: 1px solid #6fa3bd;
    border-bottom: none;
    border-radius: 5px 5px 0 0;
    background: #fff;
}

.tree {
    height: 203px;
    margin: 0;
    padding: 0;
    list-style: none;
    display: grid;
    grid-auto-rows: 1fr;
    font: 14px "Open Sans", "Noto Sans", sans-serif;
}

.tree li {
    position: relative;
    display: flex;
    align-items: center;
    gap: 5px;
    padding-left: 24px;
}

.tree li.root {
    gap: 7px;
    padding-left: 0;
}

.tree svg {
    flex: none;
    width: 19px;
    height: 19px;
}

.tree .root svg {
    width: 16px;
    height: 16px;
}

/* dotted connector lines */
.tree li:not(.root)::before {
    content: '';
    position: absolute;
    left: 9px;
    top: 0;
    bottom: 0;
    border-left: 1px dotted #8b9398;
}

.tree li:not(.root)::after {
    content: '';
    position: absolute;
    left: 10px;
    top: 50%;
    width: 13px;
    border-top: 1px dotted #8b9398;
}

.tree li.last::before {
    bottom: 50%;
}

.expand {
    position: absolute;
    z-index: 1;
    left: 4px;
    width: 11px;
    height: 11px;
    border: 1px solid #a5c4d8;
    border-radius: 2px;
    background:
        linear-gradient(#222, #222) center / 5px 1px no-repeat,
        linear-gradient(#222, #222) center / 1px 5px no-repeat,
        #dceaf4;
}

.sashes {
    display: flex;
    flex-direction: column;
    gap: 11px;
    padding-top: 272px;
}

.sash {
    flex: none;
    height: 118px;
    border: 1px solid #b4d0e2;
    border-right: none;
    border-radius: 4px 0 0 4px;
}

.sash.raised {
    height: 115px;
    border: 2px solid #9aa7af;
    border-right: none;
    background: #cfe0ec;
}

.sash::before {
    content: '';
    display: block;
    width: 4px;
    height: 4px;
    margin: 0 auto;
    border-radius: 50%;
    background: #3f4d57;
}

/* 3d view */
.viewport {
    flex: 1;
    min-width: 0;
    overflow: hidden;
    background: linear-gradient(#c7dcec, #a4bed8 32%, #7d99c0 70%, #617fab);
}

.viewport svg {
    display: block;
    width: 100%;
    height: 100%;
}

.datum {
    font: 16px "Open Sans", "Noto Sans", sans-serif;
    fill: #a0682c;
}

/* feature toolbar */
.features {
    flex: none;
    width: 85px;
    display: flex;
    gap: 2px;
    overflow: hidden;
    padding-left: 1px;
    border-left: 1px solid #e6f0f6;
}

.column {
    flex: none;
    width: 50px;
}

.column .group {
    flex-direction: column;
    align-items: flex-start;
}

.column .group::before {
    width: 50px;
    height: 4px;
    margin: 7px 0;
    background:
        repeating-linear-gradient(to right, transparent 0 2px, #dbe9f2 2px 3px),
        repeating-linear-gradient(to bottom, #6f9cba 0 1px, #c4d9e6 1px 3px);
}

.column .group:first-child::before {
    margin-top: 5px;
}

.with-flyout {
    display: flex;
    align-items: center;
}

.flyout {
    width: 16px;
    height: 32px;
}

.flyout::before {
    content: '';
    display: block;
    width: 0;
    margin: 0 auto;
    border: 4px solid transparent;
    border-left: 5px solid #2f3a42;
    border-right: none;
}
```
